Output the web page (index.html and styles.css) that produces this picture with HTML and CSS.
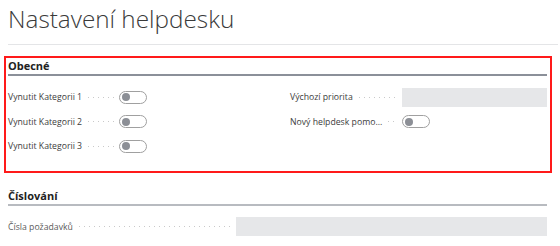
FILE: index.html
```html
<!DOCTYPE html>
<html lang="cs">
<head>
    <meta charset="UTF-8">
    <title>Nastavení helpdesku</title>
    <link rel="stylesheet" href="styles.css">
</head>
<body>
    <header class="page-header">
        <h1 class="page-title">Nastavení helpdesku</h1>
    </header>

    <section class="group group-selected">
        <h2 class="group-title">Obecné</h2>
        <div class="group-body">
            <div class="column column-left">
                <div class="field">
                    <span class="field-label"><span class="label-text">Vynutit Kategorii 1</span></span>
                    <span class="toggle"></span>
                </div>
                <div class="field">
                    <span class="field-label"><span class="label-text">Vynutit Kategorii 2</span></span>
                    <span class="toggle"></span>
                </div>
                <div class="field">
                    <span class="field-label"><span class="label-text">Vynutit Kategorii 3</span></span>
                    <span class="toggle"></span>
                </div>
            </div>
            <div class="column column-right">
                <div class="field">
                    <span class="field-label"><span class="label-text">Výchozí priorita</span></span>
                    <span class="input-box"></span>
                </div>
                <div class="field">
                    <span class="field-label"><span class="label-text">Nový helpdesk pomo...</span></span>
                    <span class="toggle"></span>
                </div>
            </div>
        </div>
    </section>

    <section class="group group-faded">
        <h2 class="group-title">Číslování</h2>
        <div class="group-body">
            <div class="field field-wide">
                <span class="field-label"><span class="label-text">Čísla požadavků</span></span>
                <span class="input-box"></span>
            </div>
        </div>
    </section>
</body>
</html>
```

FILE: styles.css
```css
body {
    margin: 0;
    padding: 0 2px 0 8px;
    font-family: "Open Sans", "Noto Sans", sans-serif;
    background-color: #ffffff;
    color: #333333;
}
.page-header {
    height: 45px;
    box-sizing: border-box;
    border-bottom: 1px solid #e4e5e7;
}
.page-title {
    margin: 0;
    padding-top: 3px;
    font-size: 24.3px;
    font-weight: 300;
    line-height: 32px;
    color: #3a3a3a;
}
.group {
    margin: 11px 6px 0 -4px;
    padding: 0 3px 12px 2px;
    border: 2px solid transparent;
}
.group-selected {
    border-color: #ff1a1a;
}
.group-faded {
    margin-top: 13px;
}
.group-title {
    margin: 0;
    height: 16px;
    font-size: 11px;
    font-weight: 700;
    line-height: 16px;
    color: #222222;
    border-bottom: 2px solid #8b9099;
}
.group-faded .group-title {
    border-bottom-color: #b8bbc0;
}
.group-body {
    display: flex;
    gap: 10px;
    padding-top: 9px;
}
.column-left {
    width: 272px;
}
.column-right {
    flex: 1;
}
.field {
    display: flex;
    align-items: center;
    height: 24.5px;
}
.field-wide {
    flex: 1;
}
.field-label {
    display: flex;
    align-items: center;
    font-size: 8.7px;
    color: #3c3c3c;
    white-space: nowrap;
}
.field-label::after {
    content: "";
    flex: 1;
    height: 1px;
    margin: 0 4px 0 6px;
    background-image: linear-gradient(to right, #c9c9c9 1px, transparent 1px);
    background-size: 5px 1px;
    background-repeat: repeat-x;
}
.column-left .field-label {
    width: 111px;
}
.column-right .field-label {
    width: 112px;
}
.field-wide .field-label {
    width: 228px;
    color: #5a5a5a;
}
.toggle {
    position: relative;
    width: 26px;
    height: 11px;
    border: 1px solid #a0a0a0;
    border-radius: 7px;
    background-color: #ffffff;
}
.toggle::before {
    content: "";
    position: absolute;
    left: 2px;
    top: 1.5px;
    width: 8px;
    height: 8px;
    border-radius: 50%;
    background-color: #8c8f96;
}
.input-box {
    flex: 1;
    height: 19px;
    background-color: #e6e7e9;
}
```
